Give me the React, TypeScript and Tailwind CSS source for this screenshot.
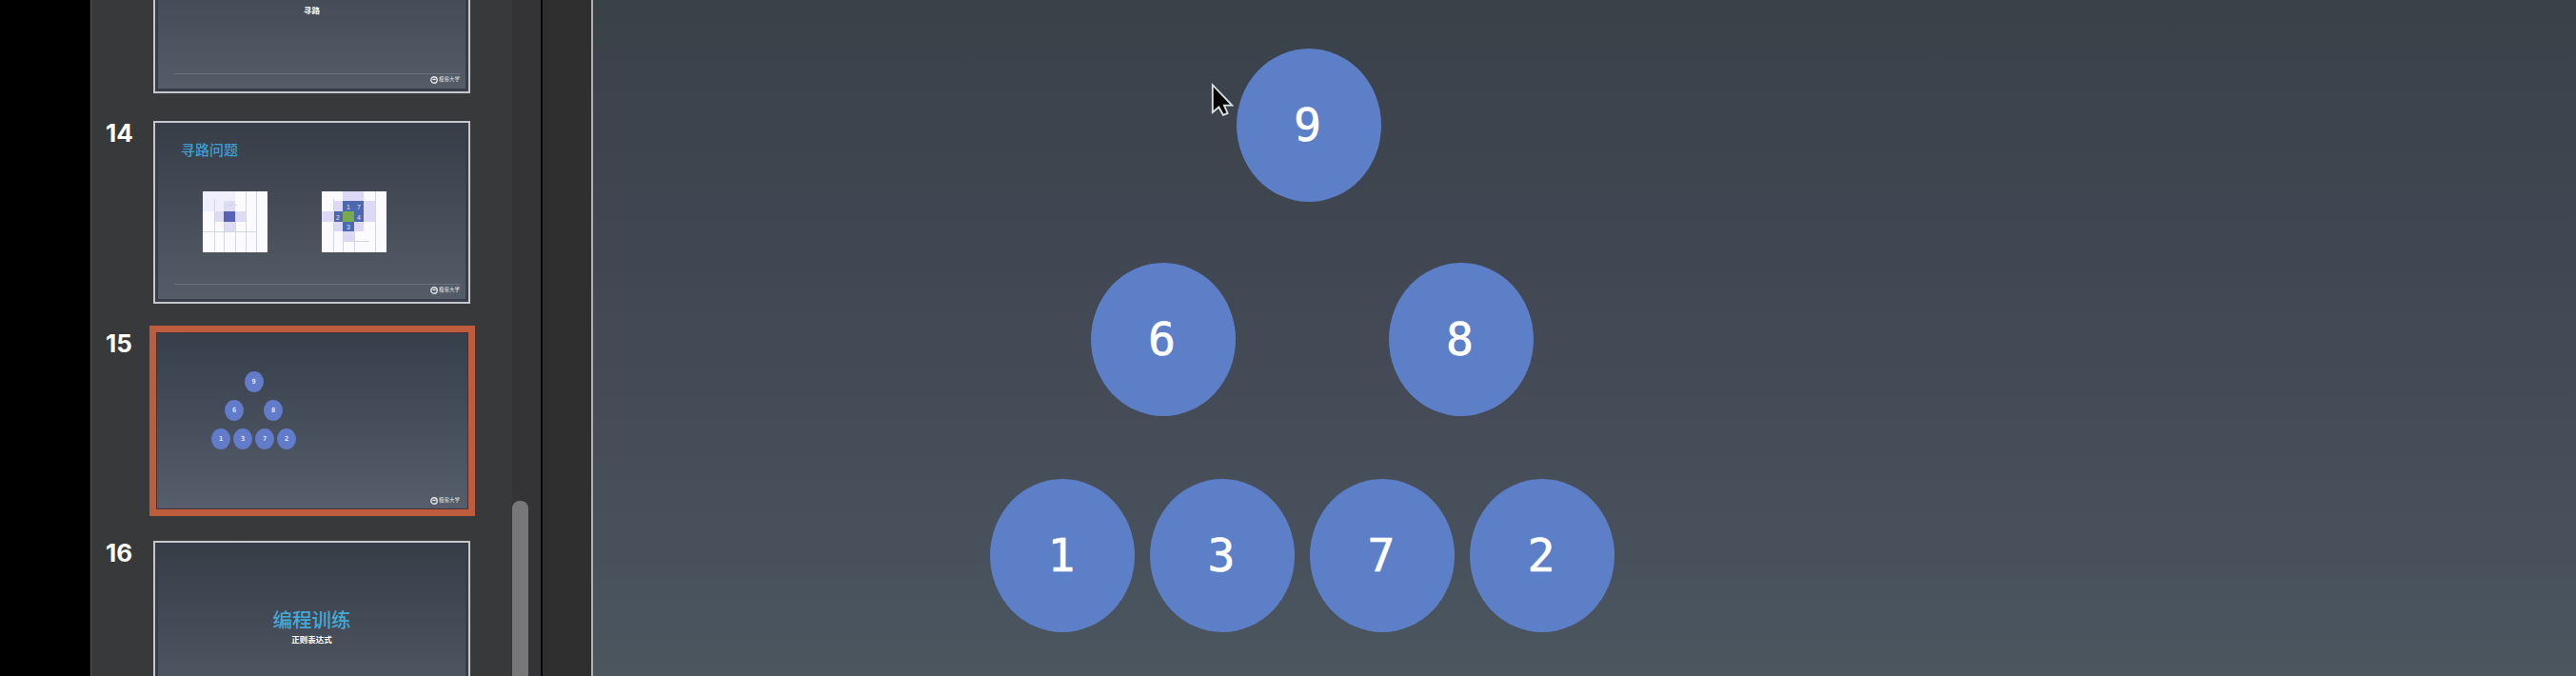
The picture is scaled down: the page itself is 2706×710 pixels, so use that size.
import type { ReactNode } from "react";

function Mark() {
  return (
    <div className="flex items-center gap-px text-[#e2e6ea]">
      <svg className="size-2" viewBox="0 0 8 8" fill="none" stroke="currentColor" strokeWidth="1.4">
        <circle cx="4" cy="4" r="3.2" />
        <path d="M2.4 3.4h3.4" />
      </svg>
      <span className="text-[5.500px] leading-[9px] font-['Noto_Sans_CJK_SC',sans-serif]">极客大学</span>
    </div>
  );
}

function Thumb({ children, footer = true }: { children?: ReactNode; footer?: boolean }) {
  return (
    <div className="relative h-[192px] w-[333px] border-2 border-[#c4c7cb] bg-linear-to-b from-[#373d47] to-[#555d69] font-['Noto_Sans_CJK_SC',sans-serif] shadow-[inset_0_0_0_3px_#383e49]">
      {children}
      {footer && (
        <>
          <div className="absolute right-2 bottom-[18px] left-5 h-px bg-[#69737d]" />
          <div className="absolute right-[9px] bottom-2">
            <Mark />
          </div>
        </>
      )}
    </div>
  );
}

function Row({ n, children }: { n?: string; children: ReactNode }) {
  return (
    <div className="flex h-[192px] shrink-0">
      <div className="-mt-px w-[65px] pl-[15px] text-[26px] leading-[27px] font-bold text-white font-[Inter,sans-serif]">{n}</div>
      {children}
    </div>
  );
}

function GridA() {
  return (
    <svg className="h-16 w-[68px]" viewBox="0 0 68 64">
      <path fill="#fafaff" d="M0 0h68v64H0z" />
      <path fill="#efeffd" d="M0 0h34v21H0z" />
      <path fill="#dcdcf2" d="M22 10h12v32H22zM12 21h33v11H12z" />
      <path fill="#5a62b8" d="M22 21h12v11H22z" />
      <path stroke="#d5d6e4" fill="none" d="M12.500 8v56M22.500 32v32M34.500 32v32M45.500 0v64M56.500 0v64M0 42.500h56M24 14.500h12" />
    </svg>
  );
}

function GridB() {
  return (
    <svg className="h-16 w-[68px]" viewBox="0 0 68 64">
      <path fill="#fafaff" d="M0 0h68v64H0z" />
      <path fill="#dcd8f5" d="M22 0h22v10H22zM0 21h12v11H0zM12 10h10v32H12zM22 42h12v11H22zM44 10h12v22H44zM34 32h10v10H34z" />
      <path fill="#4c68ae" d="M22 10h22v22H34v10H22V32H12V21h10z" />
      <path fill="#77aa4b" d="M22 21h12v11H22z" />
      <path stroke="#d5d6e4" fill="none" d="M12.500 8v56M22.500 42v22M34.500 42v22M56.500 0v64M22 52.500h28" />
      <g fill="#dfe5fa" fontSize="7" fontFamily="Liberation Sans">
        <text x="26" y="19">1</text>
        <text x="37" y="19">7</text>
        <text x="15" y="30">2</text>
        <text x="37" y="30">4</text>
        <text x="26" y="40">3</text>
      </g>
    </svg>
  );
}

function MiniNode({ v }: { v: string }) {
  return (
    <div className="flex h-[22px] w-5 items-center justify-center rounded-[50%] bg-[#627bca] text-[7px] leading-none font-bold text-[#dce8ff] font-['DejaVu_Sans_Mono',monospace]">
      {v}
    </div>
  );
}

function Node({ v }: { v: string }) {
  return (
    <div className="flex h-[161px] w-[152px] items-center justify-center rounded-[50%] bg-[#5d7fc8] pr-[2px] pb-[2px] text-[48px] leading-none text-white font-['DejaVu_Sans_Mono',monospace] [-webkit-text-stroke:0.6px_white]">
      {v}
    </div>
  );
}

export default function App() {
  return (
    <div className="flex h-[710px] w-[2706px] overflow-hidden bg-black">
      <aside className="ml-[95px] flex w-[473px] shrink-0 border-l border-[#555] bg-[#38393b]">
        <div className="-mt-[94px] flex h-[860px] w-[442px] shrink-0 flex-col">
          <Row>
            <Thumb>
              <div className="flex flex-col items-center pt-[54px] leading-none">
                <div className="text-[21px] leading-[40px] text-[#3aa5d8]">编程训练</div>
                <div className="mt-px text-[8.500px] leading-[14px] font-bold text-white">寻路</div>
              </div>
            </Thumb>
          </Row>
          <div className="h-[29px] shrink-0" />
          <Row n="14">
            <Thumb>
              <div className="pt-[18px] pl-[27px] text-[15px] leading-5 font-medium text-[#3d9fd0]">寻路问题</div>
              <div className="flex gap-[57px] pt-[34px] pl-[50px]">
                <GridA />
                <GridB />
              </div>
            </Thumb>
          </Row>
          <div className="h-[29px] shrink-0" />
          <Row n="15">
            <div className="-mt-[6px] -ml-1 h-[200px] w-[342px] shrink-0 border-[7px] border-[#bd5d3e]">
              <div className="relative h-[186px] w-[328px] border border-[#4a3035] bg-linear-to-b from-[#373f4b] to-[#565d6b]">
                <div className="flex w-[203px] flex-col items-center gap-2 pt-10">
                  <MiniNode v="9" />
                  <div className="flex gap-[21px]">
                    <MiniNode v="6" />
                    <MiniNode v="8" />
                  </div>
                  <div className="flex gap-[3px]">
                    <MiniNode v="1" />
                    <MiniNode v="3" />
                    <MiniNode v="7" />
                    <MiniNode v="2" />
                  </div>
                </div>
                <div className="absolute right-2 bottom-1">
                  <Mark />
                </div>
              </div>
            </div>
          </Row>
          <div className="h-[28px] shrink-0" />
          <Row n="16">
            <Thumb footer={false}>
              <div className="flex flex-col items-center pt-[60px]">
                <div className="text-[20.500px] leading-[40px] font-medium text-[#43a9d6]">编程训练</div>
                <div className="-mt-[6px] text-[8.500px] leading-[14px] font-bold text-white">正则表达式</div>
              </div>
            </Thumb>
          </Row>
        </div>
        <div className="flex-1 bg-[#343436] pt-[526px]">
          <div className="h-[200px] w-[17px] rounded-t-lg bg-[#777779]" />
        </div>
      </aside>
      <div className="w-[53px] shrink-0 border-l-2 border-[#060606] bg-[#2f2f2f]" />
      <main className="relative flex-1 border-l-2 border-[#b4b0ae] bg-linear-to-b from-[#394149] via-[#434955] to-[#4b565f]">
        <div className="flex w-[1503px] flex-col items-center pt-[51px]">
          <Node v="9" />
          <div className="mt-16 flex gap-[161px] pl-[7px]">
            <Node v="6" />
            <Node v="8" />
          </div>
          <div className="mt-[66px] flex gap-4 pr-[13px]">
            <Node v="1" />
            <Node v="3" />
            <Node v="7" />
            <Node v="2" />
          </div>
        </div>
        <svg className="absolute top-[85px] left-[648px] h-[40px] w-[26px]" viewBox="0 0 28 42">
          <path d="M3 4v31l7-6 5 9 5-2-4-9h9z" fill="#050505" stroke="#dbe3e6" strokeWidth="2" />
        </svg>
      </main>
    </div>
  );
}
